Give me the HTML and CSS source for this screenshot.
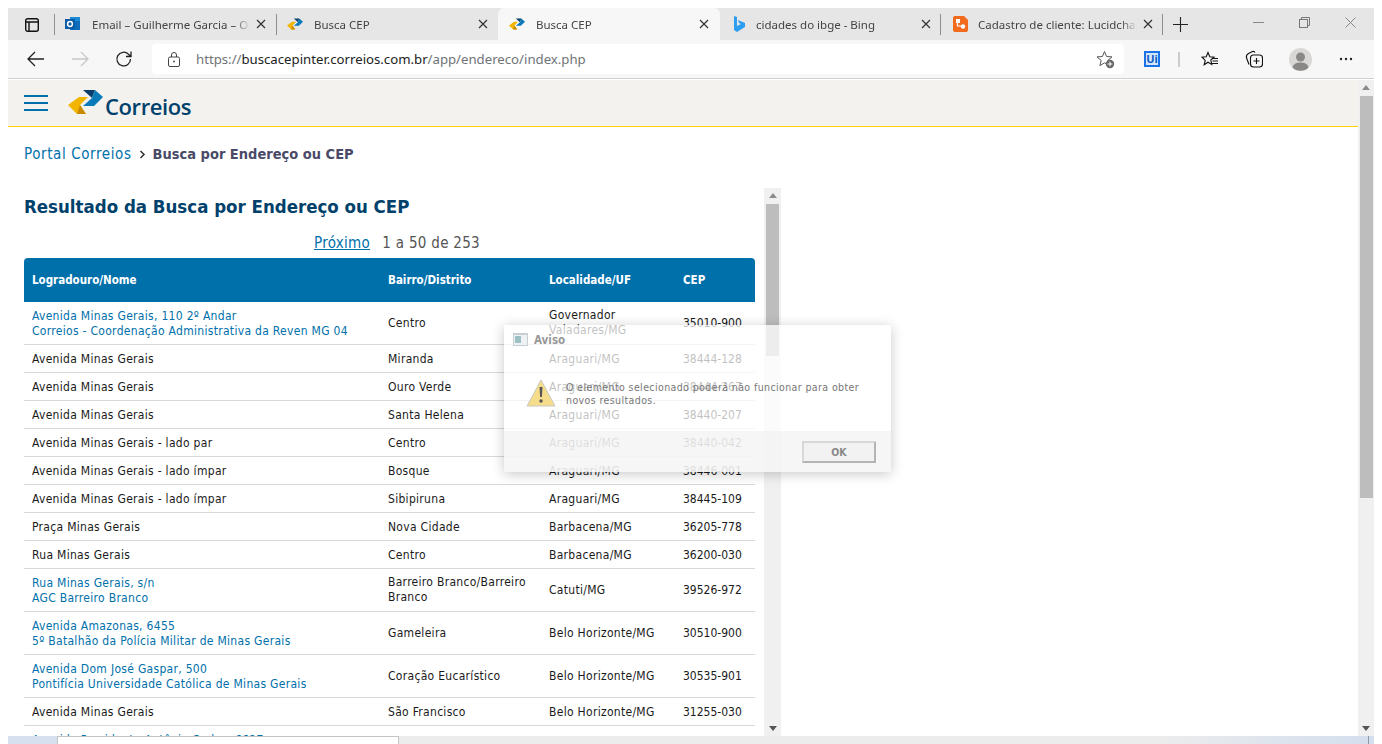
FILE: index.html
```html
<!DOCTYPE html>
<html lang="pt-BR">
<head>
    <meta charset="UTF-8">
    <title>Busca CEP</title>
    <link rel="stylesheet" href="styles.css">
</head>
<body>
<div class="window">
    <!-- tab strip -->
    <div class="tabstrip">
        <div class="tab-menu">
            <svg width="16" height="16" viewBox="0 0 16 16" fill="none" stroke="#111" stroke-width="1.4"><rect x="1.7" y="1.7" width="12.6" height="12.6" rx="2"/><path d="M1.7 5H14.300M5 5V14" /></svg>
        </div>
        <div class="tab">
            <svg class="fav" width="16" height="16" viewBox="0 0 16 16"><path d="M5 1h10v13H5z" fill="#1a8ad4"/><path d="M10 5h5v9H5v-3z" fill="#0f6cbd"/><rect x="0" y="3" width="10" height="10" fill="#0a5ca8"/><circle cx="5" cy="8" r="2.400" fill="none" stroke="#fff" stroke-width="1.500"/></svg>
            <span class="tab-title">Email – Guilherme Garcia – Outlook</span>
            <span class="tab-x"><svg width="10" height="10" viewBox="0 0 10 10" stroke="#333" stroke-width="1.200"><path d="M1 1l8 8M9 1l-8 8"/></svg></span>
        </div>
        <div class="tab">
            <svg class="fav" width="16" height="13" viewBox="0 0 35 26"><path d="M0 15L11 7h9l-8 8 6 9H9z" fill="#f2b600"/><path d="M9 24l3-9 6 9z" fill="#c98a00"/><path d="M15 0h12l-3 8z" fill="#0b3f6b"/><path d="M27 0l8 7-9 9H15l9-8z" fill="#0a7ab8"/></svg>
            <span class="tab-title">Busca CEP</span>
            <span class="tab-x"><svg width="10" height="10" viewBox="0 0 10 10" stroke="#333" stroke-width="1.200"><path d="M1 1l8 8M9 1l-8 8"/></svg></span>
        </div>
        <div class="tab active">
            <svg class="fav" width="16" height="13" viewBox="0 0 35 26"><path d="M0 15L11 7h9l-8 8 6 9H9z" fill="#f2b600"/><path d="M9 24l3-9 6 9z" fill="#c98a00"/><path d="M15 0h12l-3 8z" fill="#0b3f6b"/><path d="M27 0l8 7-9 9H15l9-8z" fill="#0a7ab8"/></svg>
            <span class="tab-title">Busca CEP</span>
            <span class="tab-x"><svg width="10" height="10" viewBox="0 0 10 10" stroke="#333" stroke-width="1.200"><path d="M1 1l8 8M9 1l-8 8"/></svg></span>
        </div>
        <div class="tab">
            <svg class="fav" width="16" height="16" viewBox="0 0 16 16"><path d="M3 0l3 1v9l4-2-2-1-1-3 7 3v4l-8 5-3-2z" fill="#2b9ef0"/></svg>
            <span class="tab-title">cidades do ibge - Bing</span>
            <span class="tab-x"><svg width="10" height="10" viewBox="0 0 10 10" stroke="#333" stroke-width="1.200"><path d="M1 1l8 8M9 1l-8 8"/></svg></span>
        </div>
        <div class="tab">
            <svg class="fav" width="16" height="16" viewBox="0 0 16 16"><path d="M2 0h9l4 4v10a2 2 0 0 1-2 2H2a2 2 0 0 1-2-2V2a2 2 0 0 1 2-2z" fill="#f26a1b"/><path d="M4.500 5v5h4" fill="none" stroke="#fff" stroke-width="1.200"/><rect x="3" y="3" width="4" height="4" fill="#fff"/><circle cx="10" cy="10.500" r="2.200" fill="#fff"/></svg>
            <span class="tab-title">Cadastro de cliente: Lucidchart</span>
            <span class="tab-x"><svg width="10" height="10" viewBox="0 0 10 10" stroke="#333" stroke-width="1.200"><path d="M1 1l8 8M9 1l-8 8"/></svg></span>
        </div>
        <div class="tab-new">
            <svg width="15" height="15" viewBox="0 0 15 15" stroke="#222" stroke-width="1.100"><path d="M7.500 0v15M0 7.500h15"/></svg>
        </div>
        <div class="win-controls">
            <svg width="11" height="11" viewBox="0 0 11 11" stroke="#888"><path d="M0 5.500h11"/></svg>
            <svg width="11" height="11" viewBox="0 0 11 11" fill="none" stroke="#777"><rect x=".5" y="2.500" width="8" height="8"/><path d="M2.500 2.500V.5h8v8h-2"/></svg>
            <svg width="11" height="11" viewBox="0 0 11 11" stroke="#888"><path d="M.5.5l10 10M10.500.5l-10 10"/></svg>
        </div>
    </div>

    <!-- toolbar -->
    <div class="toolbar">
        <div class="nav-btns">
            <svg width="18" height="16" viewBox="0 0 18 16" fill="none" stroke="#222" stroke-width="1.300"><path d="M17 8H1M8 1L1 8l7 7"/></svg>
            <svg width="18" height="16" viewBox="0 0 18 16" fill="none" stroke="#c8c8c8" stroke-width="1.300"><path d="M1 8h16M10 1l7 7-7 7"/></svg>
            <svg width="18" height="18" viewBox="0 0 18 18" fill="none" stroke="#222" stroke-width="1.300"><path d="M15.500 9a6.800 6.800 0 1 1-2-4.800L16 6.500M16 1.500v5h-5"/></svg>
        </div>
        <div class="addressbar">
            <svg class="lock" width="12" height="15" viewBox="0 0 12 15" fill="none" stroke="#444"><rect x=".5" y="5" width="11" height="9.500" rx="1.500"/><path d="M3.500 5V3a2.500 2.500 0 0 1 5 0v2"/><circle cx="6" cy="9.500" r=".9" fill="#444" stroke="none"/></svg>
            <span class="url"><span class="url-dim">https://</span>buscacepinter.correios.com.br<span class="url-dim">/app/endereco/index.php</span></span>
            <svg class="star" width="19" height="19" viewBox="0 0 19 19"><path d="M8.500 1.500l2.100 5 5.400.4-4.100 3.500 1.300 5.200-4.700-2.800-4.600 2.800 1.300-5.200L1 6.900l5.400-.4z" fill="none" stroke="#555"/><circle cx="14" cy="14" r="4.200" fill="#666"/><path d="M14 11.600v4.800M11.600 14h4.800" stroke="#fff"/></svg>
        </div>
        <div class="ext-btns">
            <span class="ui-badge">Ui</span>
            <span class="ext-sep"></span>
            <svg width="18" height="17" viewBox="0 0 18 17" fill="none" stroke="#111" stroke-width="1.100"><path d="M7 1.500l1.800 4.300 4.200.4-3.200 2.800 1 4.400L7 11.200l-3.800 2.600 1-4.400L1 6.200l4.200-.4zM12 7.500h5M11.500 10h5.500M11 12.500h6"/></svg>
            <svg width="18" height="18" viewBox="0 0 18 18" fill="none" stroke="#111" stroke-width="1.100"><path d="M4 14.500L1.500 7.800Q.8 5 3.500 3.500L7.500 1.500q1.800-.6 2.500 1"/><rect x="5.500" y="5" width="12" height="12" rx="3"/><path d="M11.500 8v6M8.500 11h6"/></svg>
            <svg class="avatar" width="23" height="23" viewBox="0 0 23 23"><circle cx="11.500" cy="11.500" r="11.500" fill="#d9d8d6"/><circle cx="11.500" cy="9" r="4.500" fill="#8a8886"/><path d="M3.500 19.500q1-5 8-5t8 5a11.500 11.500 0 0 1-16 0z" fill="#8a8886"/></svg>
            <svg width="14" height="4" viewBox="0 0 14 4" fill="#222"><circle cx="2" cy="2" r="1.200"/><circle cx="7" cy="2" r="1.200"/><circle cx="12" cy="2" r="1.200"/></svg>
        </div>
    </div>

    <!-- page -->
    <div class="viewport">
        <div class="page">
            <header class="site-header">
                <div class="burger"><span></span><span></span><span></span></div>
                <svg class="logo" width="35" height="26" viewBox="0 0 35 26"><path d="M0 15L11 7h9l-8 8 6 9H9z" fill="#f2b600"/><path d="M9 24l3-9 6 9z" fill="#c98a00"/><path d="M15 0h12l-3 8z" fill="#0b3f6b"/><path d="M27 0l8 7-9 9H15l9-8z" fill="#0a7ab8"/></svg>
                <span class="logo-text">Correios</span>
            </header>

            <div class="crumbs">
                <a href="#">Portal Correios</a>
                <svg width="7" height="9" viewBox="0 0 7 9" fill="none" stroke="#333" stroke-width="1.500"><path d="M1.500 1l3.500 3.500L1.500 8"/></svg>
                <b>Busca por Endereço ou CEP</b>
            </div>

            <div class="results">
                <div class="results-body">
                    <h1>Resultado da Busca por Endereço ou CEP</h1>
                    <div class="pager"><a href="#">Próximo</a>&nbsp; 1 a 50 de 253</div>
                    <table class="cep-table">
                        <thead>
                            <tr><th class="c1">Logradouro/Nome</th><th class="c2">Bairro/Distrito</th><th class="c3">Localidade/UF</th><th class="c4">CEP</th></tr>
                        </thead>
                        <tbody>
                            <tr><td class="link">Avenida Minas Gerais, 110 2º Andar<br>Correios - Coordenação Administrativa da Reven MG 04</td><td>Centro</td><td>Governador Valadares/MG</td><td>35010-900</td></tr>
                            <tr><td>Avenida Minas Gerais</td><td>Miranda</td><td>Araguari/MG</td><td>38444-128</td></tr>
                            <tr><td>Avenida Minas Gerais</td><td>Ouro Verde</td><td>Araguari/MG</td><td>38444-267</td></tr>
                            <tr><td>Avenida Minas Gerais</td><td>Santa Helena</td><td>Araguari/MG</td><td>38440-207</td></tr>
                            <tr><td>Avenida Minas Gerais - lado par</td><td>Centro</td><td>Araguari/MG</td><td>38440-042</td></tr>
                            <tr><td>Avenida Minas Gerais - lado ímpar</td><td>Bosque</td><td>Araguari/MG</td><td>38446-001</td></tr>
                            <tr><td>Avenida Minas Gerais - lado ímpar</td><td>Sibipiruna</td><td>Araguari/MG</td><td>38445-109</td></tr>
                            <tr><td>Praça Minas Gerais</td><td>Nova Cidade</td><td>Barbacena/MG</td><td>36205-778</td></tr>
                            <tr><td>Rua Minas Gerais</td><td>Centro</td><td>Barbacena/MG</td><td>36200-030</td></tr>
                            <tr><td class="link">Rua Minas Gerais, s/n<br>AGC Barreiro Branco</td><td>Barreiro Branco/Barreiro Branco</td><td>Catuti/MG</td><td>39526-972</td></tr>
                            <tr><td class="link">Avenida Amazonas, 6455<br>5º Batalhão da Polícia Militar de Minas Gerais</td><td>Gameleira</td><td>Belo Horizonte/MG</td><td>30510-900</td></tr>
                            <tr><td class="link">Avenida Dom José Gaspar, 500<br>Pontifícia Universidade Católica de Minas Gerais</td><td>Coração Eucarístico</td><td>Belo Horizonte/MG</td><td>30535-901</td></tr>
                            <tr><td>Avenida Minas Gerais</td><td>São Francisco</td><td>Belo Horizonte/MG</td><td>31255-030</td></tr>
                            <tr><td class="link">Avenida Presidente Antônio Carlos, 6627</td><td></td><td></td><td></td></tr>
                        </tbody>
                    </table>
                </div>
                <div class="scrollbar inner">
                    <span class="arrow up"></span>
                    <span class="thumb"></span>
                    <span class="arrow down"></span>
                </div>
            </div>
        </div>
        <div class="scrollbar outer">
            <span class="arrow up"></span>
            <span class="thumb"></span>
            <span class="arrow down"></span>
        </div>

        <!-- fading dialog, sits over the results -->
        <div class="dialog">
            <div class="dialog-title">
                <svg width="15" height="13" viewBox="0 0 15 13"><rect width="15" height="13" fill="#c9ced2"/><rect x="1" y="2" width="13" height="10" fill="#eef2f4"/><rect x="2" y="3" width="6" height="7" fill="#9cc0c4"/></svg>
                <span>Aviso</span>
            </div>
            <div class="dialog-msg">
                <svg width="30" height="28" viewBox="0 0 30 28"><path d="M15 1L29 27H1z" fill="#f5dd8c" stroke="#c9c9c0"/><path d="M13.500 8h3l-.6 10h-1.800z" fill="#555"/><circle cx="15" cy="22" r="1.700" fill="#555"/></svg>
                <p>O elemento selecionado poderá não funcionar para obter novos resultados.</p>
            </div>
            <div class="dialog-foot"><button class="ok">OK</button></div>
        </div>
    </div>

    <!-- what is left of the desktop taskbar -->
    <div class="taskbar">
        <span class="task-window"></span>
        <span class="task-clock"><span>5:05</span><span>11:12</span></span>
    </div>
</div>
</body>
</html>
```

FILE: styles.css
```css
html, body {
    margin: 0;
    padding: 0;
    height: 100%;
    overflow: hidden;
    background-color: #ffffff;
}
body {
    font-family: "DejaVu Sans", sans-serif;
    font-stretch: condensed;
    color: #1a1a1a;
}
svg {
    display: block;
    flex: none;
}
.window {
    display: flex;
    flex-direction: column;
    height: 736px;
    margin: 8px 8px 0;
}

/* tabs */
.tabstrip {
    display: flex;
    height: 32px;
    background-color: #e6e6e6;
    flex: none;
    font-family: "Noto Sans", sans-serif;
    font-stretch: normal;
}
.tab-menu {
    width: 47px;
    padding-left: 16px;
    box-sizing: border-box;
    display: flex;
    align-items: center;
    border-right: 1px solid #8f8f8f;
    margin: 6px 0 5px;
}
.tab {
    display: flex;
    align-items: center;
    width: 222px;
    box-sizing: border-box;
    padding: 0 11px 0 10px;
    position: relative;
    font-size: 11.500px;
    color: #444;
}
.tab::after {
    content: "";
    position: absolute;
    right: 0;
    top: 6px;
    bottom: 5px;
    width: 1px;
    background-color: #8f8f8f;
}
.tab.active {
    margin-left: -1px;
    background-color: #f7f7f7;
    border-radius: 6px 6px 0 0;
}
.tab.active::after {
    display: none;
}
.tab:nth-child(3)::after {
    display: none;
}
.tab.active, .tab.active ~ .tab {
    padding-left: 11px;
}
.tab.active ~ .tab::after {
    right: 1px;
}
.tab-title {
    flex: 1;
    margin-left: 11px;
    margin-right: 6px;
    white-space: nowrap;
    overflow: hidden;
    -webkit-mask-image: linear-gradient(to left, transparent 0, #000 16px);
    mask-image: linear-gradient(to left, transparent 0, #000 16px);
}
.tab.active ~ .tab .tab-title {
    margin-left: 9px;
}
.tab-new {
    width: 32px;
    display: flex;
    align-items: center;
    justify-content: center;
}
.win-controls {
    flex: 1;
    display: flex;
    justify-content: flex-end;
    align-items: center;
    gap: 35px;
    padding: 0 18px 4px 0;
}

/* toolbar */
.toolbar {
    display: flex;
    align-items: center;
    height: 38px;
    flex: none;
    background-color: #f7f7f7;
    border-bottom: 1px solid #cfcfcf;
    font-family: "Noto Sans", sans-serif;
    font-stretch: normal;
}
.nav-btns {
    display: flex;
    align-items: center;
    gap: 26px;
    width: 144px;
    padding-left: 19px;
    box-sizing: border-box;
}
.addressbar {
    display: flex;
    align-items: center;
    flex: none;
    width: 972px;
    height: 30px;
    background-color: #ffffff;
    border-radius: 4px;
    padding: 0 9px 0 16px;
    box-sizing: border-box;
    font-size: 13.200px;
}
.url {
    flex: 1;
    margin-left: 16px;
    color: #222;
}
.url-dim {
    color: #6f7378;
}
.ext-btns {
    flex: 1;
    min-width: 0;
    display: flex;
    align-items: center;
    padding-left: 20px;
}
.ui-badge {
    width: 16px;
    height: 16px;
    box-sizing: border-box;
    border: 2px solid #1a73e8;
    background-color: #d4e6fb;
    color: #0b5cc4;
    font-size: 11px;
    font-weight: 700;
    line-height: 12px;
    text-align: center;
}
.ext-sep {
    width: 2px;
    height: 15px;
    background-color: #ccc;
    margin: 0 21px 0 18px;
}
.ext-btns svg {
    margin-right: 26px;
}
.ext-btns svg.avatar {
    margin-right: 27px;
}
.ext-btns svg:last-child {
    margin-right: 0;
}

/* page */
.viewport {
    flex: 1;
    min-height: 0;
    display: flex;
    position: relative;
    margin-top: 1px;
    background-color: #ffffff;
}
.page {
    flex: 1;
    min-width: 0;
    overflow: hidden;
}
.site-header {
    display: flex;
    align-items: center;
    height: 46px;
    padding-left: 16px;
    background-color: #f3f2ef;
    border-bottom: 1px solid #ffd400;
}
.burger {
    width: 24px;
}
.burger span {
    display: block;
    height: 2px;
    margin-bottom: 5px;
    background-color: #0070ab;
}
.burger span:last-child {
    margin-bottom: 0;
}
.logo {
    margin-left: 20px;
}
.logo-text {
    margin-left: 2px;
    padding-top: 6px;
    font-family: "Open Sans", sans-serif;
    font-stretch: normal;
    font-size: 22px;
    font-weight: 600;
    letter-spacing: -0.400px;
    color: #00416b;
}
.crumbs {
    display: flex;
    align-items: center;
    gap: 7px;
    padding: 17px 16px 0;
    height: 20px;
    font-size: 14.500px;
}
.crumbs a {
    color: #0070ab;
    text-decoration: none;
    font-size: 15px;
    letter-spacing: 0.600px;
}
.crumbs b {
    color: #4a4a68;
}
.results {
    display: flex;
    height: 548px;
    margin: 24px 0 0 0;
    width: 773px;
}
.results-body {
    flex: 1;
    overflow: hidden;
    padding-left: 16px;
}
h1 {
    margin: 8px 0 0;
    font-size: 18.500px;
    line-height: 22px;
    color: #00416b;
    font-weight: 700;
}
.pager {
    margin-top: 15px;
    padding-left: 6px;
    height: 25px;
    font-size: 15px;
    line-height: 21px;
    letter-spacing: 0.300px;
    text-align: center;
    color: #555;
}
.pager a {
    margin-right: 3px;
    color: #0070ab;
}
.cep-table {
    width: 731px;
    table-layout: fixed;
    border-collapse: collapse;
    font-size: 12px;
    letter-spacing: 0.300px;
}
.cep-table th {
    height: 44px;
    padding: 0 8px;
    text-align: left;
    color: #ffffff;
    background-color: #0070ab;
    font-size: 11.500px;
    font-weight: 700;
    letter-spacing: 0;
}
.cep-table th:first-child {
    border-top-left-radius: 4px;
}
.cep-table th:last-child {
    border-top-right-radius: 4px;
}
.c1 { width: 340px; }
.c2 { width: 145px; }
.c3 { width: 118px; }
.c4 { width: 64px; }
.cep-table td {
    padding: 7px 8px 5px;
    line-height: 15px;
    border-bottom: 1px solid #d8d8d8;
}
.cep-table tr:has(.link) td:not(.link) {
    padding: 6px 8px;
}
.cep-table td:last-child {
    letter-spacing: 0;
}
.cep-table td.link {
    color: #0070ab;
}

/* scrollbars */
.scrollbar {
    position: relative;
    display: flex;
    flex-direction: column;
    align-items: center;
    flex: none;
    width: 16px;
    background-color: #f0f0f0;
}
.scrollbar.inner {
    width: 17px;
}
.thumb {
    display: block;
    background-color: #bdbdbd;
    width: 13px;
}
.inner .thumb {
    height: 152px;
}
.outer .thumb {
    height: 402px;
}
.arrow {
    width: 0;
    height: 0;
    border-left: 4px solid transparent;
    border-right: 4px solid transparent;
}
.arrow.up {
    margin: 5px 0 6px;
    border-bottom: 5px solid #8c8c8c;
}
.arrow.down {
    margin: auto 0 5px;
    border-top: 5px solid #555;
}

/* dialog */
.dialog {
    position: absolute;
    left: 496px;
    top: 245px;
    width: 387px;
    height: 147px;
    display: flex;
    flex-direction: column;
    background-color: rgba(255, 255, 255, 0.72);
    box-shadow: 0 2px 12px rgba(0, 0, 0, 0.22);
    font-size: 10.500px;
    color: #777;
}
.dialog-title {
    display: flex;
    align-items: center;
    gap: 6px;
    height: 29px;
    padding: 0 0 0 9px;
    font-size: 11.500px;
    font-weight: 600;
    color: #999;
}
.dialog-msg {
    flex: 1;
    display: flex;
    align-items: flex-start;
    gap: 10px;
    padding: 25px 20px 0 22px;
}
.dialog-msg p {
    margin: 2px 0 0;
    line-height: 13px;
    letter-spacing: 0.400px;
}
.dialog-foot {
    display: flex;
    justify-content: flex-end;
    height: 41px;
    padding: 10px 15px 0 0;
    box-sizing: border-box;
    background-color: rgba(240, 240, 240, 0.6);
}
.ok {
    width: 74px;
    height: 22px;
    padding: 0;
    font: inherit;
    font-weight: 600;
    color: #888;
    background-color: #f2f2f2;
    border: 2px solid #b4b4b4;
    border-top-color: #d8d8d8;
    border-left-color: #d8d8d8;
}

/* taskbar sliver */
.taskbar {
    flex: none;
    position: relative;
    height: 8px;
    overflow: hidden;
    display: flex;
    background: linear-gradient(to right, #d6e0ee 0, #d6e0ee 49px, #ececec 392px, #ececec 1150px, #d3deee 100%);
}
.taskbar::after {
    content: "";
    position: absolute;
    right: 5px;
    top: 0;
    bottom: 0;
    width: 1px;
    background-color: #8a98a8;
}
.task-window {
    width: 342px;
    height: 10px;
    margin-left: 49px;
    box-sizing: border-box;
    background-color: #ffffff;
    border: 1px solid #c4c4c4;
}
.task-clock {
    display: flex;
    gap: 30px;
    margin-left: auto;
    margin-right: 75px;
    margin-top: 5px;
    font-family: "Noto Sans", sans-serif;
    font-stretch: normal;
    font-size: 11px;
    line-height: 14px;
    color: #111;
    white-space: nowrap;
}
```
